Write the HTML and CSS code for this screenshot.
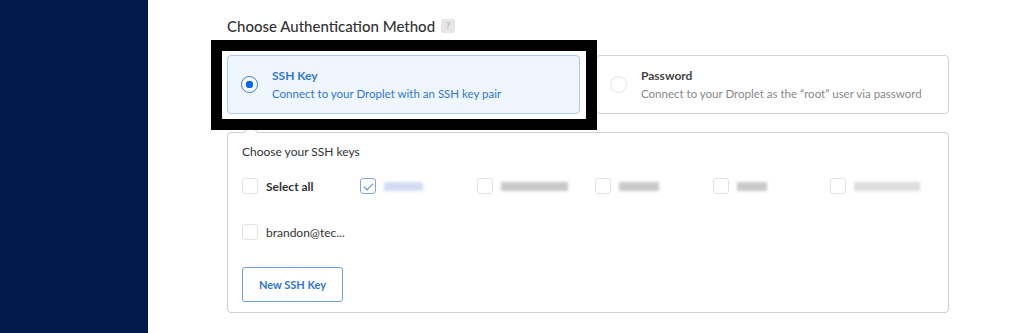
FILE: index.html
```html
<!DOCTYPE html>
<html>
	<head>
		<meta charset="UTF-8">
		<title>Choose Authentication Method</title>
		<link rel="stylesheet" href="styles.css">
	</head>
	<body>
		<div class="page">
			<div class="sidebar"></div>
			<div class="main">
				<h2 class="title">Choose Authentication Method <span class="help">?</span></h2>
				<div class="methods">
					<div class="method active">
						<span class="radio"></span>
						<div class="method_text">
							<div class="method_name">SSH Key</div>
							<div class="method_desc">Connect to your Droplet with an SSH key pair</div>
						</div>
					</div>
					<div class="method">
						<span class="radio"></span>
						<div class="method_text">
							<div class="method_name">Password</div>
							<div class="method_desc">Connect to your Droplet as the “root” user via password</div>
						</div>
					</div>
				</div>
				<div class="keys">
					<span class="keys_arrow"></span>
					<div class="keys_title">Choose your SSH keys</div>
					<ul class="keys_list">
						<li><span class="check"></span><b>Select all</b></li>
						<li><span class="check on"></span><span class="blur blue" style="width:39px"></span></li>
						<li><span class="check"></span><span class="blur" style="width:67px"></span></li>
						<li><span class="check"></span><span class="blur" style="width:40px"></span></li>
						<li><span class="check"></span><span class="blur" style="width:30px"></span></li>
						<li><span class="check"></span><span class="blur light" style="width:66px"></span></li>
						<li><span class="check"></span>brandon@tec...</li>
					</ul>
					<a class="btn" href="javascript:;">New SSH Key</a>
				</div>
			</div>
		</div>
	</body>
</html>
```

FILE: styles.css
```css
* {
	margin: 0;
	padding: 0;
	box-sizing: border-box;
}
ul {
	list-style: none;
}
body {
	font-family: Lato, "Liberation Sans", sans-serif;
	color: #333;
	background: #fff;
}
.page {
	display: flex;
	height: 333px;
	overflow: hidden;
}
.sidebar {
	width: 148px;
	flex: none;
	background: #021b4c;
}
.main {
	width: 722px;
	padding: 16px 0 0 79px;
	box-sizing: content-box;
}
.title {
	font-size: 15px;
	line-height: 20px;
	font-weight: 500;
	color: #333;
	margin-bottom: 19px;
	display: flex;
	align-items: center;
}
.help {
	display: inline-block;
	width: 14px;
	height: 14px;
	margin-left: 6px;
	background: #e6e6e6;
	color: #aaa;
	font-size: 9px;
	line-height: 14px;
	text-align: center;
	border-radius: 2px;
}
.methods {
	display: flex;
	gap: 16px;
}
.method {
	flex: 1;
	height: 59px;
	display: flex;
	align-items: center;
	border: 1px solid #d2d2d2;
	border-radius: 4px;
	padding-left: 13px;
	position: relative;
}
.method.active {
	background: #eff6fe;
	border-color: #a9c9ee;
}
/* black annotation frame */
.method.active:before {
	content: "";
	position: absolute;
	left: -17px;
	right: -18px;
	top: -16px;
	bottom: -17px;
	border: 11px solid #000;
	z-index: 2;
}
.radio {
	width: 17px;
	height: 17px;
	border: 1px solid #e4e4e4;
	border-radius: 50%;
	margin-right: 14px;
	flex: none;
}
.active .radio {
	border: 1.5px solid #3277d8;
	background: radial-gradient(circle, #0069ff 3.5px, #fff 4px);
}
.method_name {
	font-size: 12px;
	line-height: 17px;
	font-weight: 700;
	color: #444;
}
.method_desc {
	font-size: 11.5px;
	line-height: 16px;
	margin-top: 2px;
	color: #888;
}
.active .method_name,
.active .method_desc {
	color: #2f76d4;
}
.keys {
	position: relative;
	margin-top: 18px;
	height: 181px;
	border: 1px solid #cfcfcf;
	border-radius: 4px;
	padding: 10px 0 0 14px;
}
.keys_arrow {
	position: absolute;
	left: 18px;
	top: -6px;
	width: 10px;
	height: 10px;
	background: #fff;
	border-left: 1px solid #cfcfcf;
	border-top: 1px solid #cfcfcf;
	transform: rotate(45deg);
}
.keys_title {
	font-size: 12px;
	line-height: 18px;
}
.keys_list {
	margin-top: 16px;
	display: grid;
	grid-template-columns: repeat(6, 1fr);
	row-gap: 28px;
	font-size: 12px;
}
.keys_list li {
	display: flex;
	align-items: center;
	height: 18px;
	gap: 8px;
	white-space: nowrap;
}
.check {
	width: 16px;
	height: 16px;
	flex: none;
	border: 1px solid #e2e2e2;
	border-radius: 3px;
	position: relative;
}
.check.on {
	border-color: #7ea6de;
}
.check.on:after {
	content: "";
	position: absolute;
	left: 5px;
	top: 2px;
	width: 4px;
	height: 8px;
	border-right: 1.5px solid #4a86d8;
	border-bottom: 1.5px solid #4a86d8;
	transform: rotate(45deg);
}
.keys_list b {
	font-weight: 700;
}
.blur {
	display: inline-block;
	height: 9px;
	background: #c9c9c9;
	filter: blur(1.5px);
}
.blur.blue {
	background: #d3dcf5;
}
.blur.light {
	background: #dedede;
}
.btn {
	display: block;
	margin-top: 26px;
	width: 101px;
	height: 35px;
	line-height: 33px;
	border: 1px solid #6b9fe0;
	border-radius: 3px;
	text-align: center;
	font-size: 11px;
	font-weight: 700;
	color: #2f76d4;
	text-decoration: none;
}
```
